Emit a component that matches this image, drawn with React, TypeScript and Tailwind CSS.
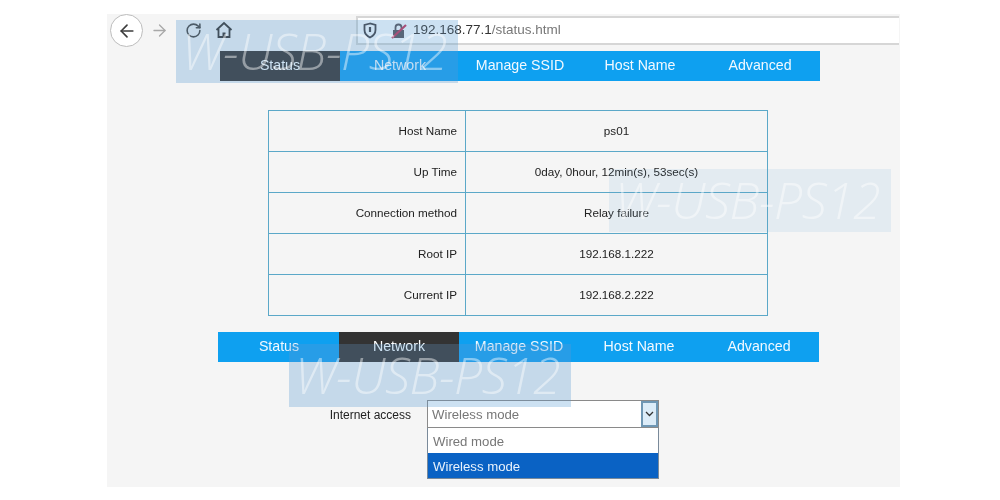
import { ArrowLeft, ArrowRight, RotateCw } from "lucide-react";

const tabs = ["Status", "Network", "Manage SSID", "Host Name", "Advanced"];

const rows = [
  ["Host Name", "ps01"],
  ["Up Time", "0day, 0hour, 12min(s), 53sec(s)"],
  ["Connection method", "Relay failure"],
  ["Root IP", "192.168.1.222"],
  ["Current IP", "192.168.2.222"],
];

function NavBar({ active, className }: { active: string; className: string }) {
  return (
    <div className={`flex h-[30px] bg-[#0ea0f0] ${className}`}>
      {tabs.map((t) => (
        <div
          key={t}
          className={`flex w-[120px] items-center justify-center text-[14.2px] ${
            t === active ? "bg-[#333333] text-white" : "text-[#f2f9ff]"
          }`}
        >
          {t}
        </div>
      ))}
    </div>
  );
}

function Watermark({ className, tint, wash }: { className: string; tint: string; wash: string }) {
  return (
    <div className={`pointer-events-none absolute h-[63px] w-[282px] ${className}`}>
      <div className={`absolute inset-0 mix-blend-multiply ${tint}`} />
      <div className={`absolute inset-0 ${wash}`} />
      <div className="relative flex h-full items-center justify-center pr-[5px] text-[50px] font-light italic tracking-[-0.5px] text-white/45 font-['Open_Sans',sans-serif]">
        W-USB-PS12
      </div>
    </div>
  );
}

export default function App() {
  return (
    <div className="relative h-[500px] w-[1000px] overflow-hidden bg-white pl-[107px] pt-[14px] font-['Liberation_Sans',Arial,sans-serif]">
      <div className="h-[473px] w-[793px] bg-[#f5f5f5]">
        {/* browser toolbar */}
        <div className="flex h-[37px] items-start">
          <div className="ml-[3px] flex h-[33px] w-[33px] items-center justify-center rounded-full border border-[#bdbdbd] bg-white">
            <ArrowLeft size={20} strokeWidth={2} className="text-[#3d3d3d]" />
          </div>
          <ArrowRight size={19} strokeWidth={1.6} className="ml-[7px] mt-[7px] text-[#a8a8a8]" />
          <RotateCw size={17} strokeWidth={2.2} className="ml-[16px] mt-[8px] text-[#444]" />
          <svg width="18" height="18" viewBox="0 0 18 18" fill="none" className="ml-[13px] mt-[7px] text-[#333]">
            <path d="M1.500 9 9 2l7.500 7" stroke="currentColor" strokeWidth="1.800" />
            <path d="M3.500 8v8h11V8" stroke="currentColor" strokeWidth="1.800" />
            <path d="M7.500 16v-4.500h3V16" fill="currentColor" />
          </svg>
          <div className="ml-[123px] mt-[2px] flex h-[29px] w-[543px] items-center border-y-2 border-l-2 border-[#d6d6d6] bg-white pl-[4px] text-[13.500px]">
            <svg width="16" height="17" viewBox="0 0 16 17" fill="none" className="text-[#3f3f46]">
              <path d="M8 1.500 2.500 3v5c0 3.500 2.500 6 5.500 7.500 3-1.500 5.500-4 5.500-7.500V3L8 1.500Z" stroke="currentColor" strokeWidth="1.800" />
              <path d="M8 5v5" stroke="currentColor" strokeWidth="2.200" />
            </svg>
            <svg width="18" height="18" viewBox="0 0 18 18" fill="none" className="ml-[12px]">
              <path d="M3 8h11v8H3z" fill="#55525a" />
              <path d="M5.500 8V5.500a3 3 0 0 1 6 0V8" stroke="#55525a" strokeWidth="1.800" />
              <path d="M2 16 16 3" stroke="#c8325a" strokeWidth="2.200" />
            </svg>
            <span className="ml-[5px] text-[#333]">192.168.77.1</span>
            <span className="text-[#777]">/status.html</span>
          </div>
        </div>

        <NavBar active="Status" className="ml-[113px] w-[600px]" />

        <div className="ml-[161px] mt-[29px] w-[500px] border border-[#5ba8c8] text-[11.700px] text-[#222]">
          {rows.map(([k, v], i) => (
            <div key={k} className={`flex items-center ${i > 0 ? "h-[41px] border-t border-[#5ba8c8]" : "h-[40px]"}`}>
              <div className="flex h-full w-[197px] items-center justify-end border-r border-[#5ba8c8] pr-[8px]">{k}</div>
              <div className="flex-1 text-center">{v}</div>
            </div>
          ))}
        </div>

        <NavBar active="Network" className="ml-[111px] mt-[16px] w-[601px] pl-[1px]" />

        <div className="ml-[111px] mt-[38px] flex items-start">
          <div className="mt-[6px] w-[193px] text-right text-[12px] text-[#222]">Internet access</div>
          <div className="ml-[16px] w-[232px] text-[13.200px]">
            <div className="flex h-[28px] items-center justify-between border border-[#8a8a8a] bg-white pl-[4px] pt-[2px] text-[#777]">
              Wireless mode
              <div className="-mt-[2px] flex h-[26px] w-[17px] items-center justify-center border-2 border-[#6f97b4] bg-[#dcecf8]">
                <svg width="9" height="6" viewBox="0 0 9 6" fill="none">
                  <path d="M1 1l3.500 3.500L8 1" stroke="#333" strokeWidth="1.300" />
                </svg>
              </div>
            </div>
            <div className="border border-t-0 border-[#7a8a9a] bg-white">
              <div className="flex h-[25px] items-center pl-[5px] pt-[3px] text-[#777]">Wired mode</div>
              <div className="flex h-[25px] items-center bg-[#0a62c4] pl-[5px] pt-[2px] text-[#e8f2fc]">Wireless mode</div>
            </div>
          </div>
        </div>
      </div>

      <Watermark className="left-[176px] top-[20px]" tint="bg-[#e8f3fb]" wash="bg-[#78aad7]/25" />
      <Watermark className="left-[609px] top-[169px]" tint="bg-[#fafcfe]" wash="bg-[#78b4dc]/10" />
      <Watermark className="left-[289px] top-[344px]" tint="bg-[#e8f3fb]" wash="bg-[#78aad7]/25" />
    </div>
  );
}
